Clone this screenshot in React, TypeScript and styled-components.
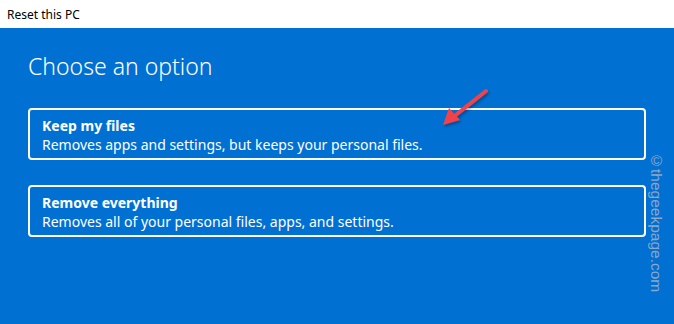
import React from "react";
import styled, { createGlobalStyle } from "styled-components";

const Global = createGlobalStyle`
  html, body { margin: 0; padding: 0; }
  body { background: #0170d3; font-family: "Segoe UI", "Noto Sans", sans-serif; }
`;

const Page = styled.div`
  position: relative;
  width: 674px;
  height: 324px;
  background: #0170d3;
  overflow: hidden;
`;

const TitleBar = styled.div`
  height: 28px;
  background: #ffffff;
  display: flex;
  align-items: center;
  padding-left: 7px;
  font-family: "Noto Sans", sans-serif;
  font-size: 12px;
  color: #000;
`;

const Content = styled.div`
  padding: 22px 28px 0 28px;
  display: flex;
  flex-direction: column;
`;

const Heading = styled.h1`
  margin: 0 0 26px 0;
  font-family: "Noto Sans", sans-serif;
  font-weight: 300;
  font-size: 23px;
  line-height: 32px;
  color: #ffffff;
`;

const Options = styled.div`
  display: flex;
  flex-direction: column;
  gap: 25px;
`;

const Card = styled.div`
  box-sizing: border-box;
  height: 52px;
  border: 2px solid #ffffff;
  border-radius: 4px;
  padding: 6px 12px 0 12px;
  color: #fff;
  font-family: "Noto Sans", sans-serif;
`;

const CardTitle = styled.div`
  font-weight: 700;
  font-size: 14px;
  line-height: 19px;
`;

const CardText = styled.div`
  font-size: 14px;
  line-height: 19px;
`;

const Watermark = styled.div`
  position: absolute;
  left: 647px;
  top: 152px;
  writing-mode: vertical-rl;
  font-family: "Liberation Sans", Arial, sans-serif;
  font-size: 15.5px;
  color: #8fa7c2;
`;

const ArrowLayer = styled.svg`
  position: absolute;
  left: 430px;
  top: 80px;
`;

export default function App() {
  return (
    <Page>
      <Global />
      <TitleBar>Reset this PC</TitleBar>
      <Content>
        <Heading>Choose an option</Heading>
        <Options>
          <Card>
            <CardTitle>Keep my files</CardTitle>
            <CardText>Removes apps and settings, but keeps your personal files.</CardText>
          </Card>
          <Card>
            <CardTitle>Remove everything</CardTitle>
            <CardText>Removes all of your personal files, apps, and settings.</CardText>
          </Card>
        </Options>
      </Content>
      <Watermark>©thegeekpage.com</Watermark>
      <ArrowLayer width="70" height="60" viewBox="0 0 70 60">
        <defs>
          <filter id="sh" x="-30%" y="-30%" width="160%" height="160%">
            <feDropShadow dx="1" dy="2" stdDeviation="1.5" floodColor="#000" floodOpacity="0.35" />
          </filter>
        </defs>
        <g filter="url(#sh)">
          <line x1="56" y1="11" x2="22" y2="38" stroke="#f0434b" strokeWidth="4" strokeLinecap="round" />
          <polygon points="13,45 19,28 30,40" fill="#f0434b" />
        </g>
      </ArrowLayer>
    </Page>
  );
}
